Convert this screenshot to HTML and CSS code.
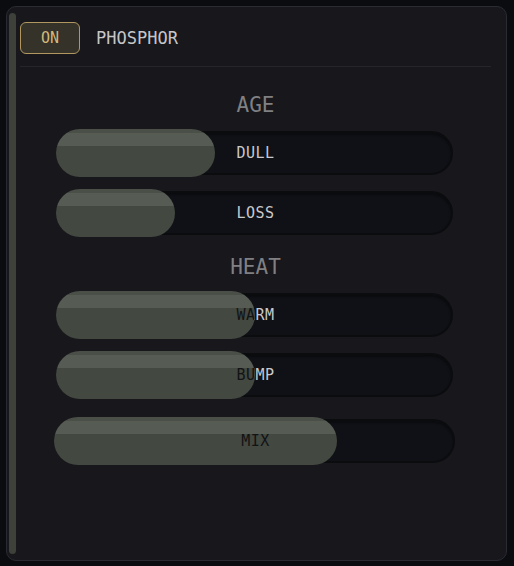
FILE: index.html
```html
<!DOCTYPE html>
<html lang="en">
<head>
    <meta charset="UTF-8">
    <meta name="viewport" content="width=device-width, initial-scale=1.0">
    <title>Phosphor</title>
    <link rel="stylesheet" href="styles.css">
</head>
<body>
    <div class="panel">
        <div class="rail"></div>
        <div class="content">
            <div class="header">
                <button class="toggle">ON</button>
                <div class="title">PHOSPHOR</div>
            </div>

            <div class="section section-first">
                <div class="heading">AGE</div>
                <div class="slider" style="--v: 40%">
                    <div class="track"></div>
                    <span class="label">DULL</span>
                    <div class="fill"></div>
                    <span class="label label-dark">DULL</span>
                </div>
                <div class="slider" style="--v: 30%">
                    <div class="track"></div>
                    <span class="label">LOSS</span>
                    <div class="fill"></div>
                    <span class="label label-dark">LOSS</span>
                </div>
            </div>

            <div class="section">
                <div class="heading">HEAT</div>
                <div class="slider" style="--v: 50%">
                    <div class="track"></div>
                    <span class="label">WARM</span>
                    <div class="fill"></div>
                    <span class="label label-dark">WARM</span>
                </div>
                <div class="slider" style="--v: 50%">
                    <div class="track"></div>
                    <span class="label">BUMP</span>
                    <div class="fill"></div>
                    <span class="label label-dark">BUMP</span>
                </div>
            </div>

            <div class="section">
                <div class="slider slider-wide" style="--v: 70.5%">
                    <div class="track"></div>
                    <span class="label">MIX</span>
                    <div class="fill"></div>
                    <span class="label label-dark">MIX</span>
                </div>
            </div>
        </div>
    </div>
</body>
</html>
```

FILE: styles.css
```css
body {
    margin: 0;
    padding: 6px 8px 5px 6px;
    background: #0b0c10;
    font-family: "DejaVu Sans Mono", "Liberation Mono", monospace;
}
.panel {
    box-sizing: border-box;
    width: 501px;
    height: 555px;
    display: flex;
    padding: 6px 0 6px 2px;
    background: #17171c;
    border: 1px solid #2a2a33;
    border-radius: 10px;
}
.rail {
    width: 7px;
    background: #3d4139;
    border-radius: 4px;
}
.content {
    flex: 1;
    padding: 9px 15px 0 4px;
}
.header {
    display: flex;
    align-items: center;
    gap: 16px;
    padding-bottom: 12px;
    border-bottom: 1px solid #25252b;
}
.toggle {
    width: 60px;
    height: 32px;
    background: #35322a;
    border: 1.5px solid #b09760;
    border-radius: 6px;
    color: #d2b979;
    font-family: inherit;
    font-size: 15px;
    padding: 0;
}
.title {
    color: #c6c6c8;
    font-size: 17px;
}
.section {
    display: flex;
    flex-direction: column;
    gap: 12px;
    padding: 0 38px 0 36px;
    margin-top: 18px;
}
.section-first {
    margin-top: 26px;
}
.heading {
    text-align: center;
    color: #808083;
    font-size: 21px;
    line-height: 24px;
    padding-left: 2px;
}
.slider {
    display: grid;
    height: 48px;
}
.slider > * {
    grid-area: 1 / 1;
}
.slider-wide {
    margin: 0 -2px;
}
.track {
    margin: 2px 0;
    background: #101116;
    border: 2px solid #0b0c0e;
    border-radius: 22px;
    box-shadow: inset 0 2px 2px rgba(0,0,0,0.35);
}
.fill {
    width: var(--v);
    border-radius: 24px;
    background: linear-gradient(to bottom, #4a4f47 0, #4a4f47 4px, #565b53 4px, #565b53 17px, #434840 17px);
}
.label {
    align-self: center;
    justify-self: center;
    color: #c9c9cb;
    font-size: 15px;
    letter-spacing: 0.5px;
    padding-left: 2px;
}
.label-dark {
    justify-self: stretch;
    text-align: center;
    color: #121315;
    clip-path: inset(0 calc(100% - var(--v)) 0 0);
}
```
